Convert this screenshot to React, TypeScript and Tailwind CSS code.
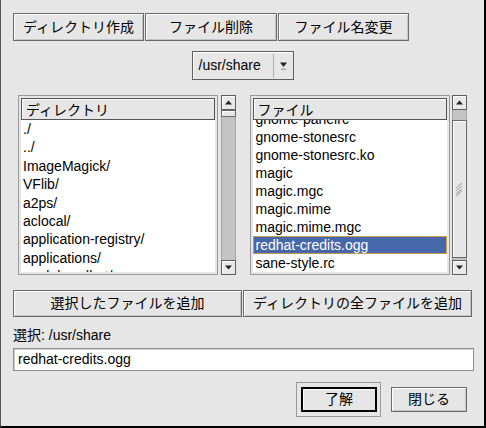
import React from 'react';

const dirs = ['./', '../', 'ImageMagick/', 'VFlib/', 'a2ps/', 'aclocal/', 'application-registry/', 'applications/', 'applnk-redhat/'];
const files = [
  'gnome-panelrc',
  'gnome-stonesrc',
  'gnome-stonesrc.ko',
  'magic',
  'magic.mgc',
  'magic.mime',
  'magic.mime.mgc',
  'redhat-credits.ogg',
  'sane-style.rc',
];

const btn =
  'flex items-center justify-center border border-[#6a6a6a] bg-[#e6e6e6] shadow-[inset_1px_1px_0_#ffffff,inset_-1px_-1px_0_#c4c4c4]';

function UpArrow() {
  return (
    <svg width="9" height="7" viewBox="0 0 9 7">
      <path d="M1 5.5h7L4.5 1.5z" fill="#222" />
    </svg>
  );
}

function DownArrow() {
  return (
    <svg width="9" height="7" viewBox="0 0 9 7">
      <path d="M1 1.5h7L4.5 5.5z" fill="#222" />
    </svg>
  );
}

function ScrollBtn({ down }: { down?: boolean }) {
  return (
    <div className="h-[15px] shrink-0 flex items-center justify-center border border-[#5e5e5e] bg-[#e9e9e9] shadow-[inset_1px_1px_0_#ffffff]">
      {down ? <DownArrow /> : <UpArrow />}
    </div>
  );
}

function Scrollbar({ thumbTop, thumbH, grip }: { thumbTop: number; thumbH: number; grip?: boolean }) {
  return (
    <div className="w-[15px] h-[180px] flex flex-col">
      <ScrollBtn />
      <div className="flex-1 bg-[#c4c4c4] border-x border-[#a6a6a6] flex flex-col">
        <div style={{ height: thumbTop }} />
        <div
          className="border border-[#6a6a6a] bg-[#e6e6e6] shadow-[inset_1px_1px_0_#ffffff] flex items-center justify-center -mx-px"
          style={{ height: thumbH }}
        >
          {grip && (
            <svg width="9" height="14" viewBox="0 0 9 14">
              <path d="M1 6l6-5M1 9l6-5M1 12l6-5M1 14l6-5" stroke="#9a9a9a" strokeWidth="1" />
            </svg>
          )}
        </div>
      </div>
      <ScrollBtn down />
    </div>
  );
}

function ListHeader({ label }: { label: string }) {
  return (
    <div className="h-[22px] shrink-0 border border-[#555] bg-[#e6e6e6] shadow-[inset_1px_1px_0_#ffffff] flex items-center pl-[4px] font-['Noto_Sans_CJK_JP',sans-serif] text-[14px] text-black relative z-10">
      {label}
    </div>
  );
}

export default function App() {
  return (
    <div className="w-[486px] h-[428px] bg-[#e6e6e6] border-l border-l-[#555] border-r-2 border-b-2 border-r-black border-b-black font-['Liberation_Sans','Noto_Sans_CJK_JP',sans-serif] text-[14px] text-black px-[12px] overflow-hidden">
      <div className="pt-[13px] flex gap-px">
        <div className={`${btn} w-[131px] h-[28px]`}>ディレクトリ作成</div>
        <div className={`${btn} w-[132px] h-[28px]`}>ファイル削除</div>
        <div className={`${btn} w-[131px] h-[28px]`}>ファイル名変更</div>
      </div>

      <div className="mt-[10px] flex justify-center">
        <div className="w-[102px] h-[29px] border border-[#5e5e5e] bg-[#e6e6e6] shadow-[inset_1px_1px_0_#ffffff] flex items-center">
          <span className="pl-[6px] flex-1">/usr/share</span>
          <div className="w-px h-[24px] bg-[#b0b0b0]" />
          <div className="w-[19px] flex flex-col items-center justify-center">
            <svg width="9" height="10" viewBox="0 0 9 10">
              <path d="M1 1.5h7L4.5 6z" fill="#222" />
              <rect x="2" y="7.5" width="5" height="1.5" fill="#aaa" />
            </svg>
          </div>
        </div>
      </div>

      <div className="mt-[15px] flex px-[5px]">
        <div className="w-[200px] h-[180px] border border-[#9a9a9a] p-[2px] flex flex-col">
          <ListHeader label="ディレクトリ" />
          <div className="flex-1 bg-white overflow-hidden">
            {dirs.map((d) => (
              <div key={d} className="h-[18.4px] leading-[18.4px] pl-[2px] whitespace-nowrap">
                {d}
              </div>
            ))}
          </div>
        </div>
        <div className="ml-[3px]">
          <Scrollbar thumbTop={0} thumbH={7} />
        </div>

        <div className="ml-[14px] w-[201px] h-[180px] border border-[#9a9a9a] p-[2px] flex flex-col">
          <ListHeader label="ファイル" />
          <div className="flex-1 bg-white overflow-hidden">
            <div className="-mt-[10px]">
              {files.map((f) =>
                f === 'redhat-credits.ogg' ? (
                  <div
                    key={f}
                    className="h-[18px] leading-[16px] pl-[2px] whitespace-nowrap bg-[#4767ab] text-white border border-[#c99b4b]"
                  >
                    {f}
                  </div>
                ) : (
                  <div key={f} className="h-[18px] leading-[18px] pl-[3px] whitespace-nowrap">
                    {f}
                  </div>
                )
              )}
            </div>
          </div>
        </div>
        <div className="ml-[2px]">
          <Scrollbar thumbTop={10} thumbH={138} grip />
        </div>
      </div>

      <div className="mt-[15px] flex gap-px">
        <div className={`${btn} w-[230px] h-[27px]`}>選択したファイルを追加</div>
        <div className={`${btn} w-[230px] h-[27px]`}>ディレクトリの全ファイルを追加</div>
      </div>

      <div className="mt-[10px] h-[17px] leading-[17px]">選択: /usr/share</div>

      <div className="mt-[4px] w-[461px] h-[23px] border border-[#8e8e8e] bg-white shadow-[inset_1px_1px_0_#d0d0d0] flex items-center pl-[4px]">
        redhat-credits.ogg
      </div>

      <div className="mt-[11px] flex justify-end pr-[5px] items-center">
        <div className="border border-[#9a9a9a] pt-[4px] pb-[4px] pl-[4px] pr-[3px]">
          <div className="w-[76px] h-[25px] border-2 border-black bg-[#e6e6e6] shadow-[inset_1px_1px_0_#ffffff] flex items-center justify-center">
            了解
          </div>
        </div>
        <div className={`${btn} ml-[10px] w-[76px] h-[25px]`}>閉じる</div>
      </div>
    </div>
  );
}
